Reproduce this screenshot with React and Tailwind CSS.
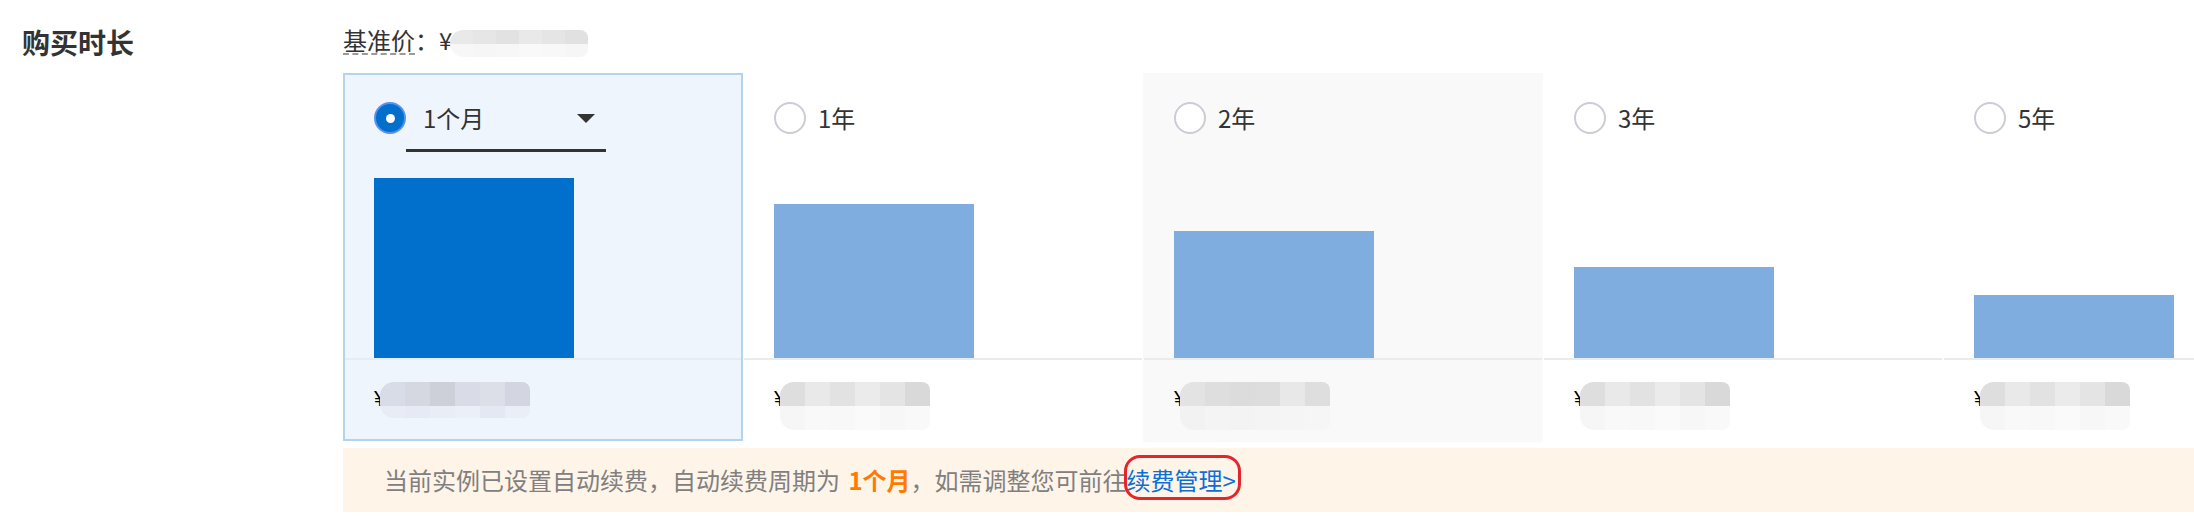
import React from "react";

const GRAY = {
  top: ["bg-[#dedede]", "bg-[#e9e9e9]", "bg-[#e2e2e2]", "bg-[#ebebeb]", "bg-[#e4e4e4]", "bg-[#d9d9d9]"],
  bottom: ["bg-[#f6f6f6]", "bg-[#f9f9f9]", "bg-[#f8f8f8]", "bg-[#fafafa]", "bg-[#f7f7f7]", "bg-[#f9f9f9]"],
};
const HOVER = {
  top: ["bg-[#e3e3e3]", "bg-[#dedede]", "bg-[#dcdcdc]", "bg-[#dddddd]", "bg-[#e8e8e8]", "bg-[#dedede]"],
  bottom: ["bg-[#f2f2f2]", "bg-[#f4f4f4]", "bg-[#f3f3f3]", "bg-[#f4f4f4]", "bg-[#f5f5f5]", "bg-[#f6f6f6]"],
};
const BLUE = {
  top: ["bg-[#d8dce6]", "bg-[#d5d8e1]", "bg-[#cdd0d9]", "bg-[#d9dce6]", "bg-[#dcdfe8]", "bg-[#d3d6e0]"],
  bottom: ["bg-[#e8ecf5]", "bg-[#e6eaf4]", "bg-[#e9edf6]", "bg-[#ebeff8]", "bg-[#e4e8f2]", "bg-[#eaeef7]"],
};

function Blur({ palette, cellW = "w-[25px]", topH = "h-[24px]", botH = "h-[24px]" }) {
  return (
    <div className="flex flex-col overflow-hidden rounded-l-[14px] rounded-r-[8px]">
      <div className="flex">
        {palette.top.map((c, i) => (
          <div key={i} className={`${cellW} ${topH} ${c}`} />
        ))}
      </div>
      <div className="flex">
        {palette.bottom.map((c, i) => (
          <div key={i} className={`${cellW} ${botH} ${c}`} />
        ))}
      </div>
    </div>
  );
}

function Radio({ checked }) {
  if (checked) {
    return (
      <div className="w-8 h-8 shrink-0 rounded-full bg-[#0070cc] border-2 border-[#5c8ff2] flex items-center justify-center">
        <div className="w-[9px] h-[9px] rounded-full bg-white" />
      </div>
    );
  }
  return <div className="w-8 h-8 shrink-0 rounded-full border-2 border-[#cbccd6] bg-white" />;
}

function Card({ label, selected, hover, barH }) {
  if (selected) {
    return (
      <div className="w-[400px] h-[368px] shrink-0 flex flex-col border-2 border-[#b4d4ee] bg-[#eff5fd]">
        <div className="h-[283px] pl-[29px] pt-[27px] flex flex-col">
          <div className="flex items-start">
            <Radio checked />
            <div className="w-[200px] h-[50px] border-b-[3px] border-[#333]">
              <div className="h-[32px] flex items-center justify-between pl-[17px] pr-[11px]">
                <span className="text-[24px] leading-[32px] text-[#333]">{label}</span>
                <svg width="18" height="9" viewBox="0 0 18 9">
                  <polygon points="0,0 18,0 9,9" fill="#333" />
                </svg>
              </div>
            </div>
          </div>
          <div className="mt-auto w-[200px] bg-[#0070cc]" style={{ height: barH }} />
        </div>
        <div className="h-[2px] bg-[#e8ebf0]" />
        <div className="flex-1 pl-[29px] pt-[22px] flex items-start">
          <span className="text-[22px] leading-[34px] text-black font-['Liberation_Sans',sans-serif]">¥</span>
          <div className="-ml-[6px]">
            <Blur palette={BLUE} topH="h-[24px]" botH="h-[12px]" />
          </div>
        </div>
      </div>
    );
  }
  return (
    <div className={`w-[400px] h-[369px] shrink-0 flex flex-col ${hover ? "bg-[#f9f9f9]" : "bg-white"}`}>
      <div className="h-[285px] pl-[31px] pt-[29px] flex flex-col">
        <div className="flex items-center h-[32px]">
          <Radio />
          <span className="ml-[12px] text-[24px] leading-[32px] text-[#333]">{label}</span>
        </div>
        <div className="mt-auto w-[200px] bg-[#7fade0]" style={{ height: barH }} />
      </div>
      <div className="h-[2px] mx-[1px] bg-[#ebebeb]" />
      <div className="flex-1 pl-[31px] pt-[22px] flex items-start">
        <span className="text-[22px] leading-[34px] text-black font-['Liberation_Sans',sans-serif]">¥</span>
        <div className="-ml-[6px]">
          <Blur palette={hover ? HOVER : GRAY} />
        </div>
      </div>
    </div>
  );
}

export default function App() {
  const cards = [
    { label: "1个月", selected: true, barH: 180 },
    { label: "1年", barH: 154 },
    { label: "2年", hover: true, barH: 127 },
    { label: "3年", barH: 91 },
    { label: "5年", barH: 63 },
  ];
  return (
    <div className="w-[2194px] h-[516px] bg-white overflow-hidden flex font-['Noto_Sans_CJK_SC','Noto_Sans',sans-serif]">
      <div className="w-[343px] shrink-0 pl-[22px] pt-[22px]">
        <div className="text-[28px] leading-[40px] font-bold text-[#333]">购买时长</div>
      </div>
      <div className="flex-1 min-w-0 pt-[26px]">
        <div className="h-[30px] flex items-center text-[24px] text-[#333]">
          <span className="leading-[26px] border-b-2 border-dashed border-[#9a9a9a]">基准价</span>
          <span className="leading-[26px] border-b-2 border-transparent">：¥</span>
          <div className="mt-[4px] -ml-[2px]">
            <Blur
              palette={{
                top: ["bg-[#e9e9e9]", "bg-[#e6e6e6]", "bg-[#e2e2e2]", "bg-[#e9e9e9]", "bg-[#e5e5e5]", "bg-[#e1e1e1]"],
                bottom: ["bg-[#f7f7f7]", "bg-[#f6f6f6]", "bg-[#f7f7f7]", "bg-[#f9f9f9]", "bg-[#f8f8f8]", "bg-[#f6f6f6]"],
              }}
              cellW="w-[23px]"
              topH="h-[14px]"
              botH="h-[13px]"
            />
          </div>
        </div>
        <div className="mt-[17px] flex">
          {cards.map((c) => (
            <Card key={c.label} {...c} />
          ))}
        </div>
        <div className="mt-[6px] h-[64px] bg-[#fff4e8] flex items-center pl-[41px] whitespace-nowrap">
          <span className="text-[24px] leading-[32px] text-[#808080]">
            当前实例已设置自动续费，自动续费周期为 <span className="ml-[3px] text-[#ff7a00] font-bold">1个月</span>，如需调整您可前往
            <span className="relative inline-block text-[#0b6fd6]">
              续费管理&gt;
              <span className="absolute -left-[3px] -right-[5px] -top-[9px] -bottom-[4px] border-[3px] border-[#e3262b] rounded-[16px]" />
            </span>
          </span>
        </div>
      </div>
    </div>
  );
}
